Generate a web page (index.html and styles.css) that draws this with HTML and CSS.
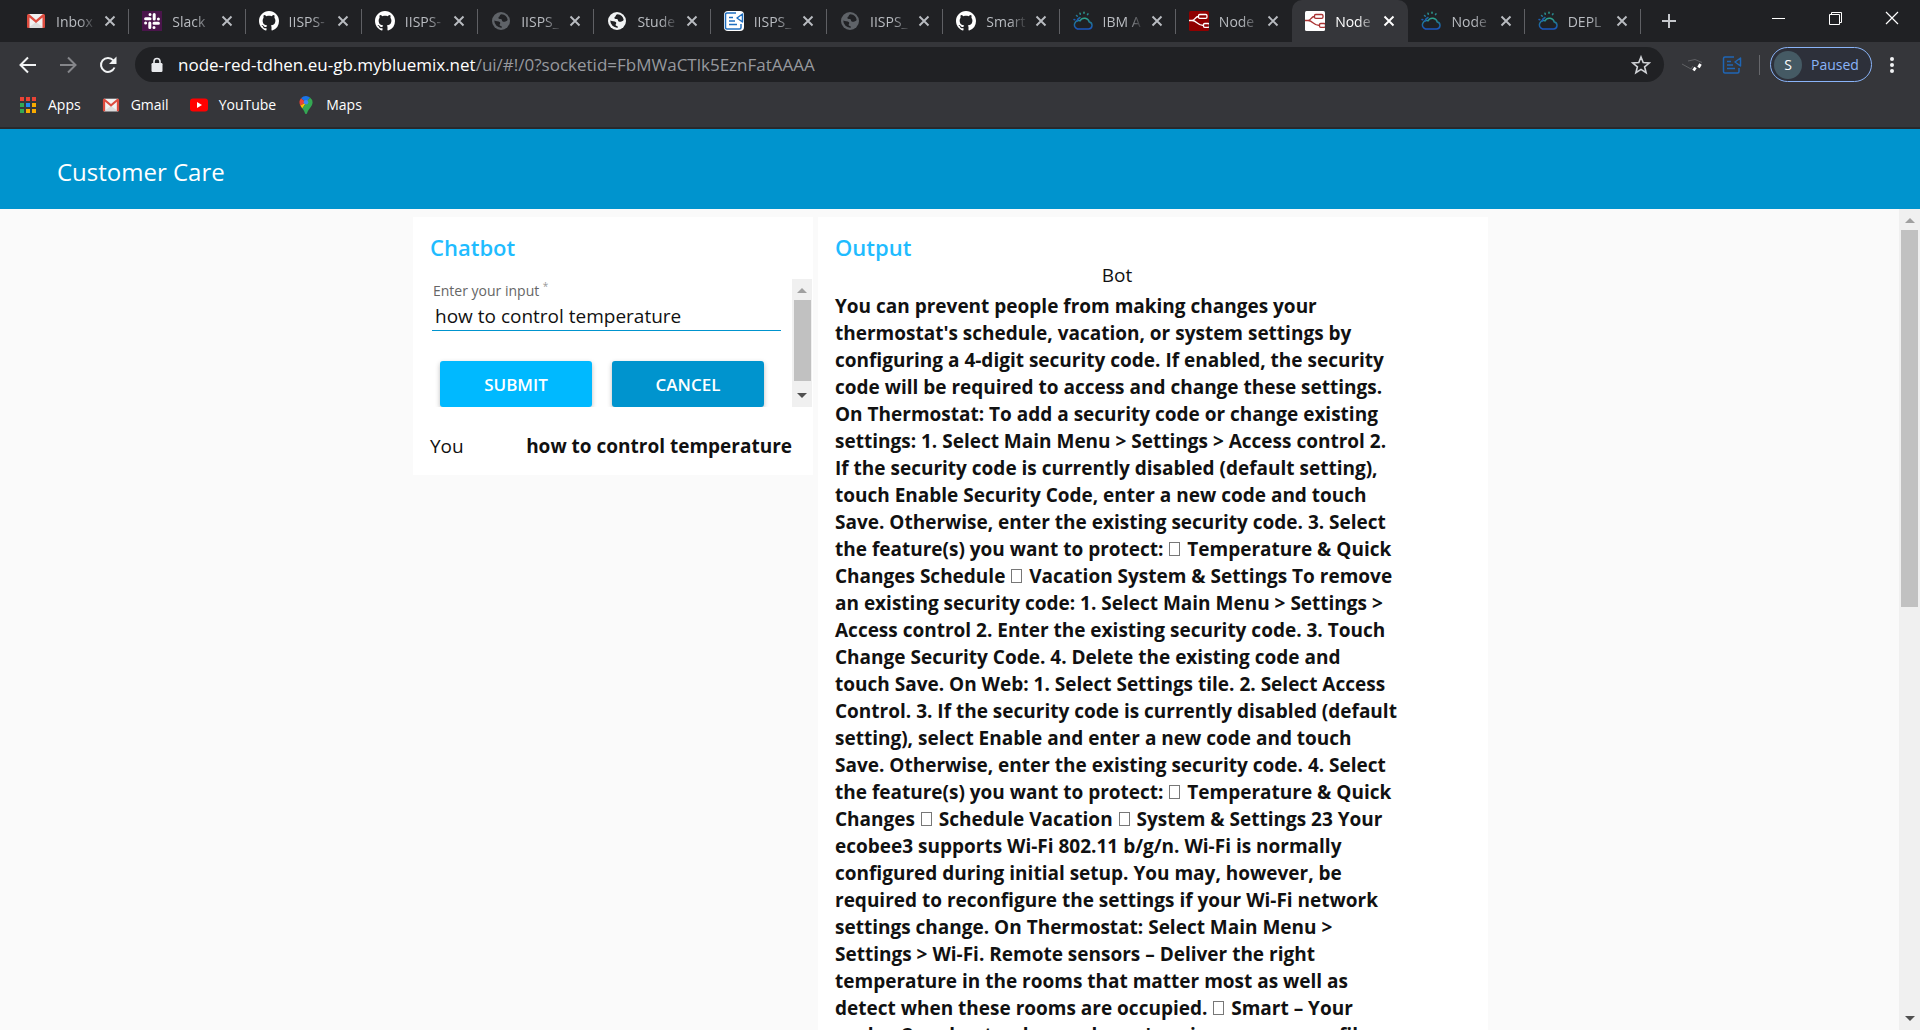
FILE: index.html
```html
<!DOCTYPE html>
<html lang="en">
<head>
<meta charset="utf-8">
<title>Node-RED Dashboard</title>
<link rel="stylesheet" href="styles.css">
</head>
<body>
<svg class="sprite" aria-hidden="true">
  <defs>
    <linearGradient id="cloud-ink" x1="0" y1="0" x2="0" y2="1">
      <stop offset="0" stop-color="#2fa58c"/><stop offset=".5" stop-color="#1e6f9a"/><stop offset="1" stop-color="#1b55c0"/>
    </linearGradient>
  </defs>
  <symbol id="i-gmail" viewBox="0 0 20 20">
    <path d="M2 3h16v14H2z" fill="#f1f1f1"/><path d="M2 17l8-6 8 6z" fill="#dcdcdc"/>
    <path d="M1 4.500Q1 3 2.500 3H3l7 6 7-6h.5Q19 3 19 4.500V16q0 1-1 1h-1.500V6.500L10 12 3.500 6.500V17H2q-1 0-1-1z" fill="#dd4b3e"/>
  </symbol>
  <symbol id="i-slack" viewBox="0 0 20 20">
    <path d="M0 0h20v20H0z" fill="#4a154b"/>
    <g stroke="#fff" stroke-width="3" stroke-linecap="round">
      <path d="M8 3.600v.01M8 7.800H3.600"/>
      <path d="M16.400 8v.01M12.200 8V3.600"/>
      <path d="M12 16.400v.01M12 12.200h4.400"/>
      <path d="M3.600 12v.01M7.800 12v4.400"/>
    </g>
  </symbol>
  <symbol id="i-github" viewBox="0 0 16 16">
    <path fill="#fff" d="M8 0C3.580 0 0 3.580 0 8c0 3.540 2.290 6.530 5.470 7.590.4.070.55-.17.55-.38 0-.19-.01-.82-.01-1.490-2.010.37-2.530-.49-2.690-.94-.09-.23-.48-.94-.82-1.130-.28-.15-.68-.52-.01-.53.63-.01 1.080.58 1.230.82.72 1.210 1.870.87 2.330.66.07-.52.28-.87.51-1.070-1.780-.2-3.640-.89-3.640-3.950 0-.87.31-1.590.82-2.150-.08-.2-.36-1.020.08-2.120 0 0 .67-.21 2.200.82.64-.18 1.320-.27 2-.27s1.360.09 2 .27c1.530-1.040 2.200-.82 2.200-.82.44 1.100.16 1.920.08 2.120.51.56.82 1.270.82 2.150 0 3.070-1.870 3.750-3.650 3.950.29.25.54.73.54 1.480 0 1.070-.01 1.930-.01 2.200 0 .21.15.46.55.38A8.010 8.010 0 0 0 16 8c0-4.420-3.580-8-8-8z"/>
  </symbol>
  <symbol id="i-globe" viewBox="0 0 20 20">
    <circle cx="10" cy="10" r="9" fill="currentColor"/>
    <path d="M10.500 3.200c-2 .2-1.200 1.800-2.500 2.600-1.200.8-.5 2.200.8 2.200 1.500 0 2.200.3 2.200 1.500s1.800 1.500 3 1.200c1.500-.4 2-1 2.700-1.600A6.800 6.800 0 0 0 10.500 3.200zM3.300 9.500c1.700 1.300 4.500.2 5.700 1.800.8 1.200-.4 1.800-.4 2.800 0 1.200 2.200.4 2.400 2.500A6.800 6.800 0 0 1 3.300 9.500z" fill="#202124"/>
  </symbol>
  <symbol id="i-note" viewBox="0 0 20 20">
    <g fill="none" stroke="currentColor" stroke-width="1.500" stroke-linejoin="round"><path d="M12 2H3Q1.500 2 1.500 3.500v13Q1.500 18 3 18h12.500q1.500 0 1.500-1.500V13"/><path d="M18.500 3v8L13 7zM5 6.500h4M5 10h6M5 13.500h8"/></g>
  </symbol>
  <symbol id="i-cloud" viewBox="0 0 20 20">
    <g fill="none" stroke="url(#cloud-ink)" stroke-width="1.500" stroke-linecap="round"><path d="M4.500 18h11a3.500 3.500 0 0 0 .8-6.900A5 5 0 0 0 7 9.800 4.200 4.200 0 0 0 4.500 18z"/><path d="M4 10a5.500 5.500 0 0 1 3-3.500M1 8.500l.8.3M3.500 4.500l.8.8M7 2.200l.3 1M11 1.200v1M15 2.800l-.5.9"/></g>
  </symbol>
  <symbol id="i-flow" viewBox="0 0 20 20">
    <rect width="20" height="20" rx="1.500" fill="var(--flow-bg)"/>
    <g fill="none" stroke="currentColor" stroke-width="1.300"><rect x="9.500" y="3.500" width="8.500" height="3.800" rx="1.200"/><rect x="14.500" y="12.500" width="6" height="3.800" rx="1.200"/><path d="M0 9.500h3c3 0 3-4 6.500-4M3 9.500c5 0 5 5 11.500 5"/></g>
  </symbol>
  <symbol id="i-x" viewBox="0 0 12 12"><path d="M1.500 1.500l9 9M10.500 1.500l-9 9" stroke="currentColor" stroke-width="1.900"/></symbol>
</svg>

<header class="browser">
  <div class="tabstrip">
    <nav class="tabs" aria-label="Tabs">
      <div class="tab"><svg><use href="#i-gmail"/></svg><span>Inbox</span><button aria-label="Close tab"><svg><use href="#i-x"/></svg></button></div>
      <div class="tab"><svg><use href="#i-slack"/></svg><span>Slack</span><button aria-label="Close tab"><svg><use href="#i-x"/></svg></button></div>
      <div class="tab"><svg><use href="#i-github"/></svg><span>IISPS-</span><button aria-label="Close tab"><svg><use href="#i-x"/></svg></button></div>
      <div class="tab"><svg><use href="#i-github"/></svg><span>IISPS-</span><button aria-label="Close tab"><svg><use href="#i-x"/></svg></button></div>
      <div class="tab"><svg class="dim"><use href="#i-globe"/></svg><span>IISPS_</span><button aria-label="Close tab"><svg><use href="#i-x"/></svg></button></div>
      <div class="tab"><svg class="lit"><use href="#i-globe"/></svg><span>Stude</span><button aria-label="Close tab"><svg><use href="#i-x"/></svg></button></div>
      <div class="tab"><svg class="note"><use href="#i-note"/></svg><span>IISPS_</span><button aria-label="Close tab"><svg><use href="#i-x"/></svg></button></div>
      <div class="tab"><svg class="dim"><use href="#i-globe"/></svg><span>IISPS_</span><button aria-label="Close tab"><svg><use href="#i-x"/></svg></button></div>
      <div class="tab"><svg><use href="#i-github"/></svg><span>Smart</span><button aria-label="Close tab"><svg><use href="#i-x"/></svg></button></div>
      <div class="tab"><svg><use href="#i-cloud"/></svg><span>IBM A</span><button aria-label="Close tab"><svg><use href="#i-x"/></svg></button></div>
      <div class="tab no-line"><svg class="flow"><use href="#i-flow"/></svg><span>Node</span><button aria-label="Close tab"><svg><use href="#i-x"/></svg></button></div>
      <div class="tab no-line active"><svg class="flow light"><use href="#i-flow"/></svg><span>Node</span><button aria-label="Close tab"><svg><use href="#i-x"/></svg></button></div>
      <div class="tab"><svg><use href="#i-cloud"/></svg><span>Node</span><button aria-label="Close tab"><svg><use href="#i-x"/></svg></button></div>
      <div class="tab"><svg><use href="#i-cloud"/></svg><span>DEPL</span><button aria-label="Close tab"><svg><use href="#i-x"/></svg></button></div>
    </nav>
    <button class="new-tab" aria-label="New tab"><svg viewBox="0 0 16 16"><path d="M8 1v14M1 8h14" stroke="currentColor" stroke-width="2"/></svg></button>
    <div class="window-controls">
      <button aria-label="Minimize"><svg viewBox="0 0 16 16"><path d="M2 8.500h13" stroke="#fff"/></svg></button>
      <button aria-label="Restore"><svg viewBox="0 0 16 16"><path d="M2.500 4.500h10v10h-10zM4.500 4.500v-2h10v10h-2" fill="none" stroke="#fff"/></svg></button>
      <button aria-label="Close"><svg viewBox="0 0 16 16"><path d="M2 2l12 12M14 2L2 14" stroke="#fff" stroke-width="1.200"/></svg></button>
    </div>
  </div>

  <div class="toolbar">
    <button class="tool" aria-label="Back"><svg viewBox="0 0 20 20"><path d="M18 10H3M10 2.500L2.500 10l7.500 7.500" fill="none" stroke="#f1f3f4" stroke-width="2"/></svg></button>
    <button class="tool" aria-label="Forward"><svg viewBox="0 0 20 20"><path d="M2 10h15M10 2.500l7.500 7.500-7.500 7.500" fill="none" stroke="#85868a" stroke-width="2"/></svg></button>
    <button class="tool" aria-label="Reload"><svg viewBox="0 0 20 20"><path d="M16.500 12.500a7 7 0 1 1-1.200-7.200" fill="none" stroke="#f1f3f4" stroke-width="2"/><path d="M18.500 1.500v7.500H11z" fill="#f1f3f4"/></svg></button>
    <div class="omnibox">
      <svg class="lock" viewBox="0 0 12 16"><rect y="6" x=".5" width="11" height="9" rx="1.200" fill="#e8eaed"/><path d="M3 7V4.500a3 3 0 0 1 6 0V7" fill="none" stroke="#e8eaed" stroke-width="1.600"/></svg>
      <p class="url"><b>node-red-tdhen.eu-gb.mybluemix.net</b>/ui/#!/0?socketid=FbMWaCTlk5EznFatAAAA</p>
      <button class="star" aria-label="Bookmark this tab"><svg viewBox="0 0 20 20"><path d="M10 2l2.200 5.600 6 .4-4.600 3.800 1.500 5.900L10 14.400l-5.100 3.300 1.500-5.900L1.800 8l6-.4z" fill="none" stroke="#d0d2d6" stroke-width="1.600"/></svg></button>
    </div>
    <button class="tool" aria-label="Extension"><svg viewBox="0 0 20 20"><path d="M0 9l9 5 2-3M6 6l7-1.500 7 3" fill="none" stroke="#606165"/><path d="M11.500 15.500l2-3M16.500 12.500l2-3.500" stroke="#fff" stroke-width="2.800"/></svg></button>
    <button class="tool blue" aria-label="Reader extension"><svg><use href="#i-note"/></svg></button>
    <i class="divider"></i>
    <button class="profile"><span>S</span>Paused</button>
    <button class="tool" aria-label="Menu"><svg viewBox="0 0 20 20" fill="#f1f3f4"><circle cx="10" cy="4" r="2"/><circle cx="10" cy="10" r="2"/><circle cx="10" cy="16" r="2"/></svg></button>
  </div>

  <nav class="bookmarks" aria-label="Bookmarks">
    <a href="#"><svg viewBox="0 0 18 18"><path d="M1 1h4v4H1zM7 1h4v4H7zM13 1h4v4h-4z" fill="#ea4335"/><path d="M1 7h4v4H1zM1 13h4v4H1z" fill="#34a853"/><path d="M7 7h4v4H7z" fill="#2188f3"/><path d="M13 7h4v4h-4zM7 13h4v4H7zM13 13h4v4h-4z" fill="#f9ab00"/></svg>Apps</a>
    <a href="#"><svg><use href="#i-gmail"/></svg>Gmail</a>
    <a href="#"><svg viewBox="0 0 18 18"><rect y="2.500" width="18" height="13" rx="3" fill="#f00"/><path d="M7 6l5 3-5 3z" fill="#fff"/></svg>YouTube</a>
    <a href="#"><svg viewBox="0 0 18 18"><path d="M9 0a6.500 6.500 0 0 0-5 2.300l5 4.200 4-5A6.500 6.500 0 0 0 9 0z" fill="#1a73e8"/><path d="M4 2.300A6.500 6.500 0 0 0 3.300 9.500L9 6.500z" fill="#ea4335"/><path d="M3.300 9.500l2 3L13 1.500l-4 5z" fill="#fbbc04"/><path d="M13 1.500a6.500 6.500 0 0 1 2 7.500c-1 2.500-4 4.500-5 8.300-.3 1-1.700 1-2 0-.5-2-1.500-3.300-2.700-4.800z" fill="#34a853"/><circle cx="9" cy="6.200" r="2.300" fill="#4285f4"/></svg>Maps</a>
  </nav>
</header>

<header class="appbar"><h1>Customer Care</h1></header>

<div class="viewport">
  <main class="dashboard">
    <section class="card chatbot">
      <h2>Chatbot</h2>
      <div class="form-scroll">
        <form>
          <label for="question">Enter your input <sup>*</sup></label>
          <input id="question" type="text" value="how to control temperature">
          <div class="actions">
            <button type="button">SUBMIT</button>
            <button type="button" class="cancel">CANCEL</button>
          </div>
        </form>
        <div class="scrollbar"><i class="up"></i><i class="thumb"></i><i class="down"></i></div>
      </div>
      <p class="you"><span>You</span><b>how to control temperature</b></p>
    </section>

    <section class="card output">
      <h2>Output</h2>
      <p class="bot">Bot</p>
      <p class="answer">You can prevent people from making changes your<br>
thermostat's schedule, vacation, or system settings by<br>
configuring a 4-digit security code. If enabled, the security<br>
code will be required to access and change these settings.<br>
On Thermostat: To add a security code or change existing<br>
settings: 1. Select Main Menu &gt; Settings &gt; Access control 2.<br>
If the security code is currently disabled (default setting),<br>
touch Enable Security Code, enter a new code and touch<br>
Save. Otherwise, enter the existing security code. 3. Select<br>
the feature(s) you want to protect: <i class="glyph"></i> Temperature &amp; Quick<br>
Changes Schedule <i class="glyph"></i> Vacation System &amp; Settings To remove<br>
an existing security code: 1. Select Main Menu &gt; Settings &gt;<br>
Access control 2. Enter the existing security code. 3. Touch<br>
Change Security Code. 4. Delete the existing code and<br>
touch Save. On Web: 1. Select Settings tile. 2. Select Access<br>
Control. 3. If the security code is currently disabled (default<br>
setting), select Enable and enter a new code and touch<br>
Save. Otherwise, enter the existing security code. 4. Select<br>
the feature(s) you want to protect: <i class="glyph"></i> Temperature &amp; Quick<br>
Changes <i class="glyph"></i> Schedule Vacation <i class="glyph"></i> System &amp; Settings 23 Your<br>
ecobee3 supports Wi-Fi 802.11 b/g/n. Wi-Fi is normally<br>
configured during initial setup. You may, however, be<br>
required to reconfigure the settings if your Wi-Fi network<br>
settings change. On Thermostat: Select Main Menu &gt;<br>
Settings &gt; Wi-Fi. Remote sensors – Deliver the right<br>
temperature in the rooms that matter most as well as<br>
detect when these rooms are occupied. <i class="glyph"></i> Smart – Your<br>
ecobee3 understands your home's unique energy profile</p>
    </section>
  </main>
  <div class="scrollbar page"><i class="up"></i><i class="thumb"></i><i class="down"></i></div>
</div>
</body>
</html>
```
FILE: styles.css
```css
* { box-sizing: border-box; }

body {
  margin: 0;
  height: 100vh;
  display: flex;
  flex-direction: column;
  overflow: hidden;
  background: #fafafa;
  color: #111;
  font-family: "Open Sans", "Noto Sans", sans-serif;
  font-size: 19px;
}

h1, h2, p { margin: 0; }
button { padding: 0; border: 0; background: none; color: inherit; font-family: inherit; }
svg { display: block; flex: none; width: 20px; height: 20px; }
.sprite { position: absolute; width: 0; height: 0; }

/* Browser frame */
.browser {
  flex: none;
  background: #35363a;
  border-bottom: 2px solid #28292c;
  color: #fff;
}

.tabstrip {
  display: flex;
  height: 42px;
  padding-left: 13px;
  background: #202124;
}

.tabs {
  flex: 1;
  min-width: 0;
  display: grid;
  grid-template-columns: repeat(14, minmax(0, 1fr));
}

.tab {
  position: relative;
  display: flex;
  align-items: center;
  padding: 0 13px;
  color: #b9bcc1;
  font-size: 14px;
}
.tab::after {
  content: "";
  position: absolute;
  right: 0;
  top: 9px;
  width: 1px;
  height: 25px;
  background: #5f6064;
}
.tab.no-line::after { display: none; }
.tab span {
  flex: 1;
  min-width: 0;
  margin: 0 7px 0 10px;
  white-space: nowrap;
  mask-image: linear-gradient(to right, #000 55%, transparent);
}
.tab button svg { width: 12px; height: 12px; }
.tab .dim { color: #5f6368; }
.tab .lit { color: #f1f3f4; }
.tab .note { color: #1f6fc0; background: #fff; border-radius: 4px; }
.tab .flow { --flow-bg: #8f0000; color: #fff; }
.tab .flow.light { --flow-bg: #fff; color: #a33; }
.tab.active {
  background: #35363a;
  border-radius: 10px 10px 0 0;
  color: #fff;
}

.new-tab {
  display: grid;
  place-items: center;
  width: 56px;
  color: #c6c8cc;
}
.new-tab svg { width: 16px; height: 16px; }

.window-controls {
  display: flex;
  width: 223px;
  padding-left: 53px;
}
.window-controls button {
  flex: 1;
  display: grid;
  place-items: center;
  height: 36px;
}
.window-controls svg { width: 16px; height: 16px; }

.toolbar {
  display: flex;
  align-items: center;
  height: 45px;
  padding: 0 8px;
}
.tool {
  display: grid;
  place-items: center;
  width: 40px;
  height: 35px;
}
.tool.blue { color: #1f66b5; }

.omnibox {
  flex: 1;
  display: flex;
  align-items: center;
  height: 35px;
  margin: 0 8px 0 7px;
  padding: 0 13px 0 16px;
  border-radius: 18px;
  background: #202124;
}
.lock { width: 12px; height: 16px; }
.url {
  flex: 1;
  margin-left: 15px;
  color: #97999e;
  font-size: 17px;
  line-height: 24px;
}
.url b { color: #fff; font-weight: 400; }

.divider { width: 1px; height: 20px; margin: 0 10px 0 7px; background: #66676b; }
.profile {
  display: flex;
  align-items: center;
  gap: 9px;
  width: 102px;
  height: 35px;
  padding-left: 3px;
  border: 1px solid #8ab4f8;
  border-radius: 18px;
  background: #2d303a;
  color: #8ab4f8;
  font-size: 14px;
}
.profile span {
  width: 28px;
  border-radius: 50%;
  background: #455a64;
  color: #fff;
  line-height: 28px;
}

.bookmarks {
  display: flex;
  gap: 21px;
  height: 40px;
  padding: 0 19px;
}
.bookmarks a {
  display: flex;
  align-items: center;
  gap: 11px;
  height: 35px;
  color: #fff;
  font-size: 14px;
  text-decoration: none;
}
.bookmarks svg { width: 18px; height: 18px; }

/* Dashboard */
.appbar {
  flex: none;
  display: flex;
  align-items: center;
  height: 80px;
  padding: 4px 57px 0;
  background: #0094ce;
  color: #fff;
}
.appbar h1 { font-size: 24px; font-weight: 400; }

.viewport {
  flex: 1;
  min-height: 0;
  display: flex;
  overflow: hidden;
}
.dashboard {
  flex: 1;
  display: grid;
  grid-template-columns: minmax(0, 400px) minmax(0, 670px);
  justify-content: center;
  align-items: start;
  gap: 5px;
  padding: 8px 0 0 2px;
}
.card { background: #fff; padding: 16px 17px; }
.card h2 {
  color: #1fbcff;
  font-size: 22px;
  font-weight: 600;
  line-height: 28px;
}

.card.chatbot { padding: 16px 1px 15px 17px; }
.form-scroll {
  display: flex;
  height: 128px;
  margin-top: 18px;
  overflow: hidden;
}
form {
  flex: 1;
  display: flex;
  flex-direction: column;
  padding: 2px 11px 0 2px;
}
form label {
  padding-left: 1px;
  color: #666;
  font-size: 14px;
  line-height: 20px;
}
sup { font-size: 10px; line-height: 10px; color: #999; }
form input {
  height: 32px;
  padding: 0 0 0 3px;
  border: 0;
  border-bottom: 1px solid #0094ce;
  outline: 0;
  background: none;
  color: #111;
  font-family: inherit;
  font-size: 19px;
}
.actions {
  display: grid;
  grid-template-columns: 1fr 1fr;
  gap: 20px;
  margin: 30px 17px 0 8px;
}
.actions button {
  height: 46px;
  border-radius: 3px;
  background: #00b9ff;
  box-shadow: 0 2px 5px rgba(0, 0, 0, .26);
  color: #fff;
  font-size: 17px;
  font-weight: 600;
}
.actions .cancel { background: #0094ce; }

.you {
  display: flex;
  justify-content: space-between;
  padding: 26px 20px 0 0;
  line-height: 27px;
}

.bot { padding-right: 72px; text-align: center; line-height: 28px; }
.answer {
  padding-top: 4px;
  font-weight: 700;
  line-height: 27px;
  white-space: nowrap;
}
.glyph {
  display: inline-block;
  width: 11px;
  height: 14px;
  margin: 0 2px 0 1px;
  border: 1px solid #777;
}

/* Scrollbars */
.scrollbar {
  flex: none;
  display: flex;
  flex-direction: column;
  align-items: center;
  width: 20px;
  padding: 9px 0;
  background: #f0f0f0;
}
.scrollbar .up, .scrollbar .down {
  border: 5px solid transparent;
}
.scrollbar .up { border-top: 0; border-bottom-color: #a0a0a0; }
.scrollbar .down { border-bottom: 0; border-top-color: #505050; margin-top: auto; }
.scrollbar .thumb { width: 17px; height: 81px; margin-top: 7px; background: #c1c1c1; }
.scrollbar.page { width: 21px; }
.scrollbar.page .thumb { height: 47%; }
```
